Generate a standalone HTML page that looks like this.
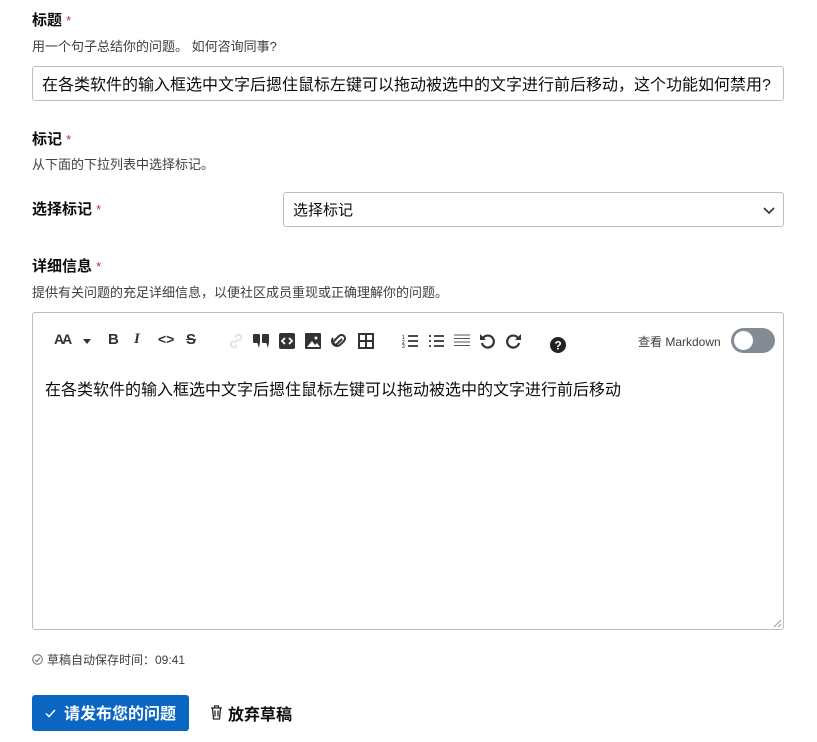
<!DOCTYPE html>
<html><head><meta charset="utf-8"><style>
*{box-sizing:border-box;margin:0;padding:0}
body{width:817px;height:742px;background:#fff;font-family:"Liberation Sans","Noto Sans CJK SC",sans-serif;color:#232629;position:relative;overflow:hidden}
.a{position:absolute}
.lbl{font-size:15px;font-weight:bold;color:#0c0d0e}
.lbl span{color:#c22e32;font-weight:normal;font-size:13px}
.sub{font-size:13px;color:#3b4045}
.box{border:1px solid #babfc4;border-radius:3px;background:#fff}
.ic{position:absolute;top:331px;font-size:15px;font-weight:bold;color:#333}
</style></head><body>
<div class="a lbl" style="left:32px;top:9px">标题 <span>*</span></div>
<div class="a sub" style="left:32px;top:36px">用一个句子总结你的问题。 如何咨询同事?</div>
<div class="a box" style="left:32px;top:66px;width:752px;height:35px;font-size:16px;padding:4px 9px;white-space:nowrap;color:#0c0d0e">在各类软件的输入框选中文字后摁住鼠标左键可以拖动被选中的文字进行前后移动，这个功能如何禁用?</div>
<div class="a lbl" style="left:32px;top:128px">标记 <span>*</span></div>
<div class="a sub" style="left:32px;top:154px">从下面的下拉列表中选择标记。</div>
<div class="a lbl" style="left:32px;top:198px">选择标记 <span>*</span></div>
<div class="a box" style="left:283px;top:192px;width:501px;height:35px;font-size:15px;padding:6px 9px;color:#0c0d0e">选择标记
<svg class="a" style="right:8px;top:14px" width="12" height="8" viewBox="0 0 12 8"><path d="M1 1l5 5 5-5" fill="none" stroke="#333" stroke-width="1.6"/></svg></div>
<div class="a lbl" style="left:32px;top:255px">详细信息 <span>*</span></div>
<div class="a sub" style="left:32px;top:282px">提供有关问题的充足详细信息，以便社区成员重现或正确理解你的问题。</div>
<div class="a box" style="left:32px;top:312px;width:752px;height:318px"></div>
<div class="ic" style="left:54px;font-size:14px;letter-spacing:-2px">AA</div>
<svg class="a" style="left:83px;top:339px" width="8" height="5"><path d="M0 0h8L4 5z" fill="#333"/></svg>
<div class="ic" style="left:108px">B</div>
<div class="ic" style="left:134px;font-style:italic;font-family:'Liberation Serif',serif">I</div>
<div class="ic" style="left:158px;font-size:14px">&lt;&gt;</div>
<div class="ic" style="left:186px;text-decoration:line-through">S</div>
<svg class="a" style="left:228px;top:333px" width="16" height="16"><path d="M7 4l2-2a3 3 0 0 1 4 4l-2 2M9 12l-2 2a3 3 0 0 1-4-4l2-2M6 10l4-4" fill="none" stroke="#dfe3e5" stroke-width="2"/></svg>
<svg class="a" style="left:253px;top:334px" width="17" height="14"><rect x="0" y="0" width="7" height="9" rx="1" fill="#333"/><rect x="9" y="0" width="7" height="9" rx="1" fill="#333"/><path d="M4 8l2 6 1-6M13 8l2 6 1-6" fill="#333"/></svg>
<svg class="a" style="left:279px;top:333px" width="16" height="16"><rect width="16" height="16" rx="2" fill="#333"/><path d="M6 5L3 8l3 3M10 5l3 3-3 3" stroke="#fff" stroke-width="1.8" fill="none"/></svg>
<svg class="a" style="left:305px;top:333px" width="16" height="16"><rect width="16" height="16" rx="1" fill="#333"/><path d="M2 14l5-6 3 4 2-2 3 4z" fill="#fff"/><circle cx="11" cy="5" r="1.5" fill="#fff"/></svg>
<svg class="a" style="left:331px;top:334px" width="17" height="14"><path d="M11 5L6 10a2 2 0 0 1-3-3l5-5a3.5 3.5 0 0 1 5 5L9 11a5 5 0 0 1-7-7" fill="none" stroke="#333" stroke-width="2"/></svg>
<svg class="a" style="left:358px;top:333px" width="16" height="16"><rect x="1" y="1" width="14" height="14" fill="none" stroke="#333" stroke-width="2"/><path d="M8 1v14M1 8h14" stroke="#333" stroke-width="2"/></svg>
<svg class="a" style="left:402px;top:334px" width="16" height="14"><path d="M6 2h10M6 7h10M6 12h10" stroke="#333" stroke-width="1.8"/><text x="0" y="5" font-size="5">1</text><text x="0" y="10" font-size="5">2</text><text x="0" y="14" font-size="5">3</text></svg>
<svg class="a" style="left:428px;top:334px" width="16" height="14"><path d="M6 2h10M6 7h10M6 12h10M1 2h2M1 7h2M1 12h2" stroke="#333" stroke-width="1.8"/></svg>
<svg class="a" style="left:454px;top:334px" width="16" height="14"><path d="M0 1h16M0 4.5h16M0 8h16M0 11.5h16" stroke="#555" stroke-width="1"/></svg>
<svg class="a" style="left:479px;top:332px" width="17" height="17"><path d="M4 6A6 6 0 1 1 3 11" fill="none" stroke="#333" stroke-width="2.2"/><path d="M1 2v6h6z" fill="#333"/></svg>
<svg class="a" style="left:505px;top:332px" width="17" height="17"><path d="M13 6A6 6 0 1 0 14 11" fill="none" stroke="#333" stroke-width="2.2"/><path d="M16 2v6h-6z" fill="#333"/></svg>
<svg class="a" style="left:550px;top:337px" width="16" height="16"><circle cx="8" cy="8" r="8" fill="#222"/><text x="8" y="12.5" font-size="12" font-weight="bold" fill="#fff" text-anchor="middle" font-family="Liberation Sans">?</text></svg>
<div class="a" style="left:638px;top:333px;font-size:12px;color:#3b4045">查看 Markdown</div>
<div class="a" style="left:731px;top:328px;width:44px;height:25px;border-radius:13px;background:#838c95"><div class="a" style="left:3px;top:3px;width:19px;height:19px;border-radius:50%;background:#fff"></div></div>
<div class="a" style="left:45px;top:376px;font-size:16px;color:#0c0d0e">在各类软件的输入框选中文字后摁住鼠标左键可以拖动被选中的文字进行前后移动</div>
<svg class="a" style="left:772px;top:618px" width="10" height="10"><path d="M9 2L2 9M9 6L6 9" stroke="#999"/></svg>
<svg class="a" style="left:32px;top:654px" width="11" height="11"><circle cx="5.5" cy="5.5" r="4.8" fill="none" stroke="#6a737c"/><path d="M3 5.8l1.8 1.8L8 4" fill="none" stroke="#6a737c"/></svg>
<div class="a" style="left:47px;top:651px;font-size:12px;color:#3b4045">草稿自动保存时间：09:41</div>
<div class="a" style="left:32px;top:695px;width:157px;height:36px;background:#0a66c2;border-radius:3px;color:#fff;font-size:16px;font-weight:bold;padding:5px 0 0 32px">请发布您的问题
<svg class="a" style="left:13px;top:14px" width="11" height="9"><path d="M1 4.5l3 3L10 1" fill="none" stroke="#fff" stroke-width="1.5"/></svg></div>
<svg class="a" style="left:210px;top:705px" width="13" height="15"><path d="M1 3h11M4.5 3V1h4v2M2.5 3l1 11h6l1-11M5 5.5v6M8 5.5v6" fill="none" stroke="#232629" stroke-width="1.3"/></svg>
<div class="a" style="left:228px;top:701px;font-size:16px;font-weight:bold;color:#0c0d0e">放弃草稿</div>
</body></html>
